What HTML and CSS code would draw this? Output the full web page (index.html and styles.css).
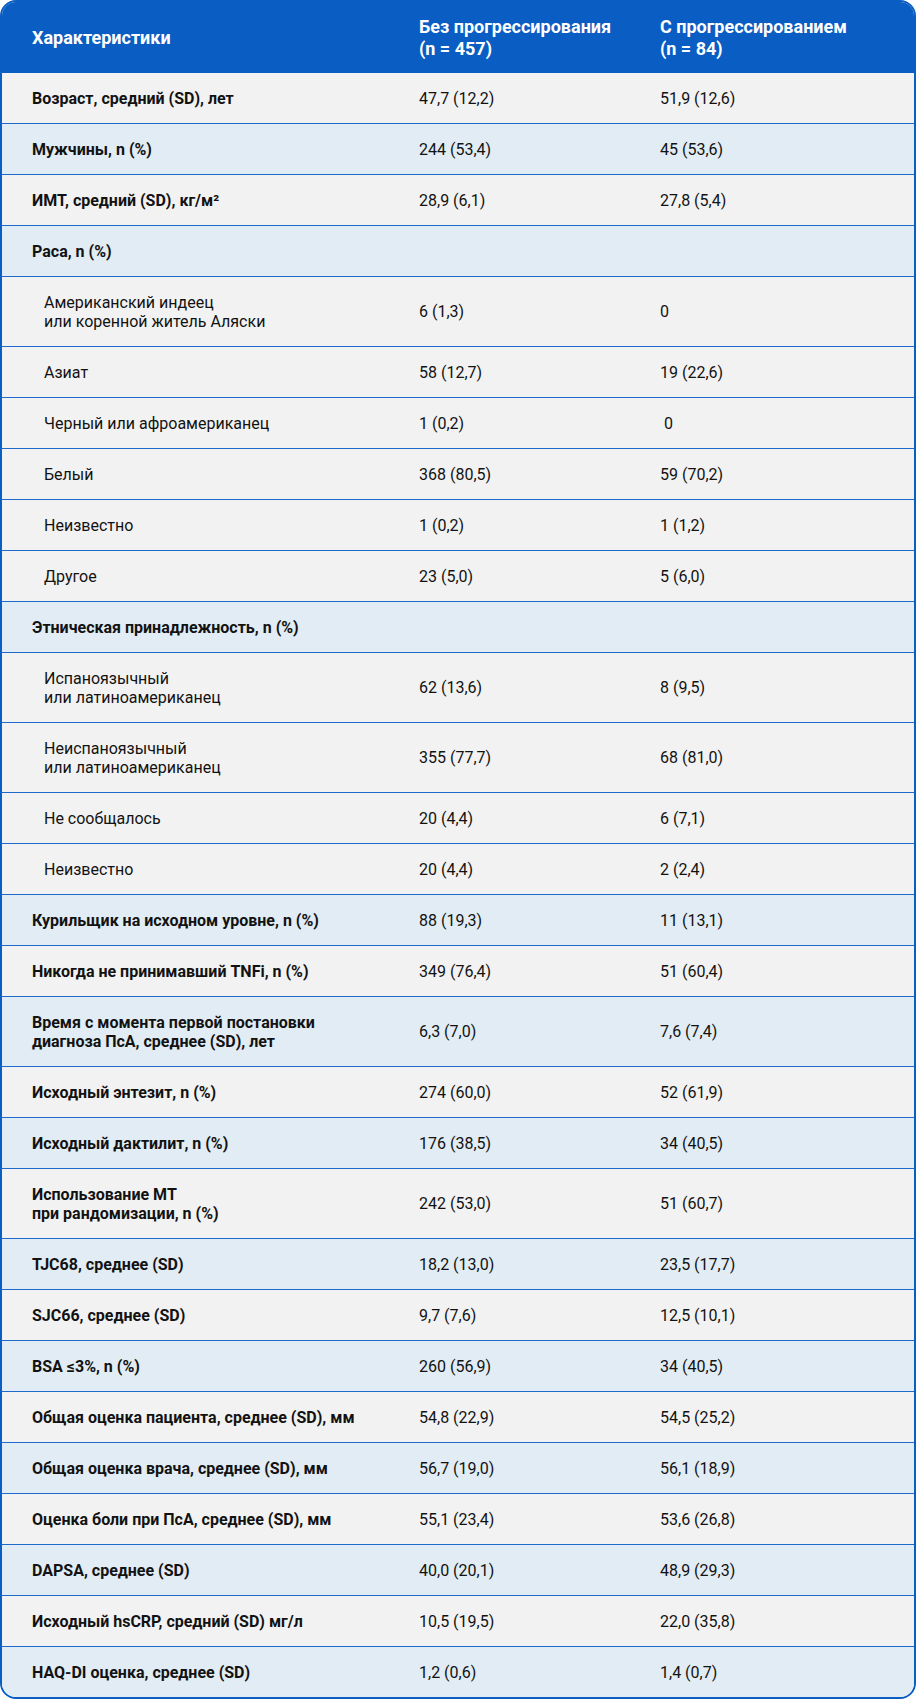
FILE: index.html
```html
<!DOCTYPE html>
<html lang="ru">
<head>
<meta charset="utf-8">
<title>Характеристики</title>
<link rel="stylesheet" href="styles.css">
</head>
<body>
<div class="table">
  <div class="row head">
    <div class="cell">Характеристики</div>
    <div class="cell">Без прогрессирования<br>(n = 457)</div>
    <div class="cell">С прогрессированием<br>(n = 84)</div>
  </div>
  <div class="row main gray"><div class="cell">Возраст, средний (SD), лет</div><div class="cell">47,7 (12,2)</div><div class="cell">51,9 (12,6)</div></div>
  <div class="row main blue"><div class="cell">Мужчины, n (%)</div><div class="cell">244 (53,4)</div><div class="cell">45 (53,6)</div></div>
  <div class="row main gray"><div class="cell">ИМТ, средний (SD), кг/м²</div><div class="cell">28,9 (6,1)</div><div class="cell">27,8 (5,4)</div></div>
  <div class="row main blue"><div class="cell">Раса, n (%)</div><div class="cell"></div><div class="cell"></div></div>
  <div class="row sub gray"><div class="cell">Американский индеец<br>или коренной житель Аляски</div><div class="cell">6 (1,3)</div><div class="cell">0</div></div>
  <div class="row sub gray"><div class="cell">Азиат</div><div class="cell">58 (12,7)</div><div class="cell">19 (22,6)</div></div>
  <div class="row sub gray"><div class="cell">Черный или афроамериканец</div><div class="cell">1 (0,2)</div><div class="cell">&nbsp;0</div></div>
  <div class="row sub gray"><div class="cell">Белый</div><div class="cell">368 (80,5)</div><div class="cell">59 (70,2)</div></div>
  <div class="row sub gray"><div class="cell">Неизвестно</div><div class="cell">1 (0,2)</div><div class="cell">1 (1,2)</div></div>
  <div class="row sub gray"><div class="cell">Другое</div><div class="cell">23 (5,0)</div><div class="cell">5 (6,0)</div></div>
  <div class="row main blue"><div class="cell">Этническая принадлежность, n (%)</div><div class="cell"></div><div class="cell"></div></div>
  <div class="row sub gray"><div class="cell">Испаноязычный<br>или латиноамериканец</div><div class="cell">62 (13,6)</div><div class="cell">8 (9,5)</div></div>
  <div class="row sub gray"><div class="cell">Неиспаноязычный<br>или латиноамериканец</div><div class="cell">355 (77,7)</div><div class="cell">68 (81,0)</div></div>
  <div class="row sub gray"><div class="cell">Не сообщалось</div><div class="cell">20 (4,4)</div><div class="cell">6 (7,1)</div></div>
  <div class="row sub gray"><div class="cell">Неизвестно</div><div class="cell">20 (4,4)</div><div class="cell">2 (2,4)</div></div>
  <div class="row main blue"><div class="cell">Курильщик на исходном уровне, n (%)</div><div class="cell">88 (19,3)</div><div class="cell">11 (13,1)</div></div>
  <div class="row main gray"><div class="cell">Никогда не принимавший TNFi, n (%)</div><div class="cell">349 (76,4)</div><div class="cell">51 (60,4)</div></div>
  <div class="row main blue"><div class="cell">Время с момента первой постановки<br>диагноза ПсА, среднее (SD), лет</div><div class="cell">6,3 (7,0)</div><div class="cell">7,6 (7,4)</div></div>
  <div class="row main gray"><div class="cell">Исходный энтезит, n (%)</div><div class="cell">274 (60,0)</div><div class="cell">52 (61,9)</div></div>
  <div class="row main blue"><div class="cell">Исходный дактилит, n (%)</div><div class="cell">176 (38,5)</div><div class="cell">34 (40,5)</div></div>
  <div class="row main gray"><div class="cell">Использование МТ<br>при рандомизации, n (%)</div><div class="cell">242 (53,0)</div><div class="cell">51 (60,7)</div></div>
  <div class="row main blue"><div class="cell">TJC68, среднее (SD)</div><div class="cell">18,2 (13,0)</div><div class="cell">23,5 (17,7)</div></div>
  <div class="row main gray"><div class="cell">SJC66, среднее (SD)</div><div class="cell">9,7 (7,6)</div><div class="cell">12,5 (10,1)</div></div>
  <div class="row main blue"><div class="cell">BSA ≤3%, n (%)</div><div class="cell">260 (56,9)</div><div class="cell">34 (40,5)</div></div>
  <div class="row main gray"><div class="cell">Общая оценка пациента, среднее (SD), мм</div><div class="cell">54,8 (22,9)</div><div class="cell">54,5 (25,2)</div></div>
  <div class="row main blue"><div class="cell">Общая оценка врача, среднее (SD), мм</div><div class="cell">56,7 (19,0)</div><div class="cell">56,1 (18,9)</div></div>
  <div class="row main gray"><div class="cell">Оценка боли при ПсА, среднее (SD), мм</div><div class="cell">55,1 (23,4)</div><div class="cell">53,6 (26,8)</div></div>
  <div class="row main blue"><div class="cell">DAPSA, среднее (SD)</div><div class="cell">40,0 (20,1)</div><div class="cell">48,9 (29,3)</div></div>
  <div class="row main gray"><div class="cell">Исходный hsCRP, средний (SD) мг/л</div><div class="cell">10,5 (19,5)</div><div class="cell">22,0 (35,8)</div></div>
  <div class="row main blue"><div class="cell">HAQ-DI оценка, среднее (SD)</div><div class="cell">1,2 (0,6)</div><div class="cell">1,4 (0,7)</div></div>
</div>
</body>
</html>
```
FILE: styles.css
```css
html, body {
  margin: 0;
  padding: 0;
  background: #ffffff;
}
body {
  font-family: Roboto, "Liberation Sans", sans-serif;
  font-size: 16px;
  line-height: 19px;
  color: #121212;
}
.table {
  width: 916px;
  box-sizing: border-box;
  border: 2px solid #0a5dc2;
  border-radius: 16px;
  overflow: hidden;
}
.row {
  display: grid;
  grid-template-columns: 387px 241px 1fr;
  align-items: center;
  padding: 15.5px 0 15.5px 30px;
  border-top: 1px solid #1c6acb;
}
.row.head {
  border-top: 0;
  background: #0a5dc2;
  color: #ffffff;
  font-weight: 700;
  font-size: 18px;
  line-height: 22px;
  padding: 13.5px 0 13.5px 30px;
  height: 71px;
  box-sizing: border-box;
}
.row.head + .row {
  border-top: 0;
}
.gray { background: #f2f2f2; }
.blue { background: #e1ecf4; }
.main .cell:first-child { font-weight: 700; }
.sub .cell:first-child { padding-left: 12px; }
```
